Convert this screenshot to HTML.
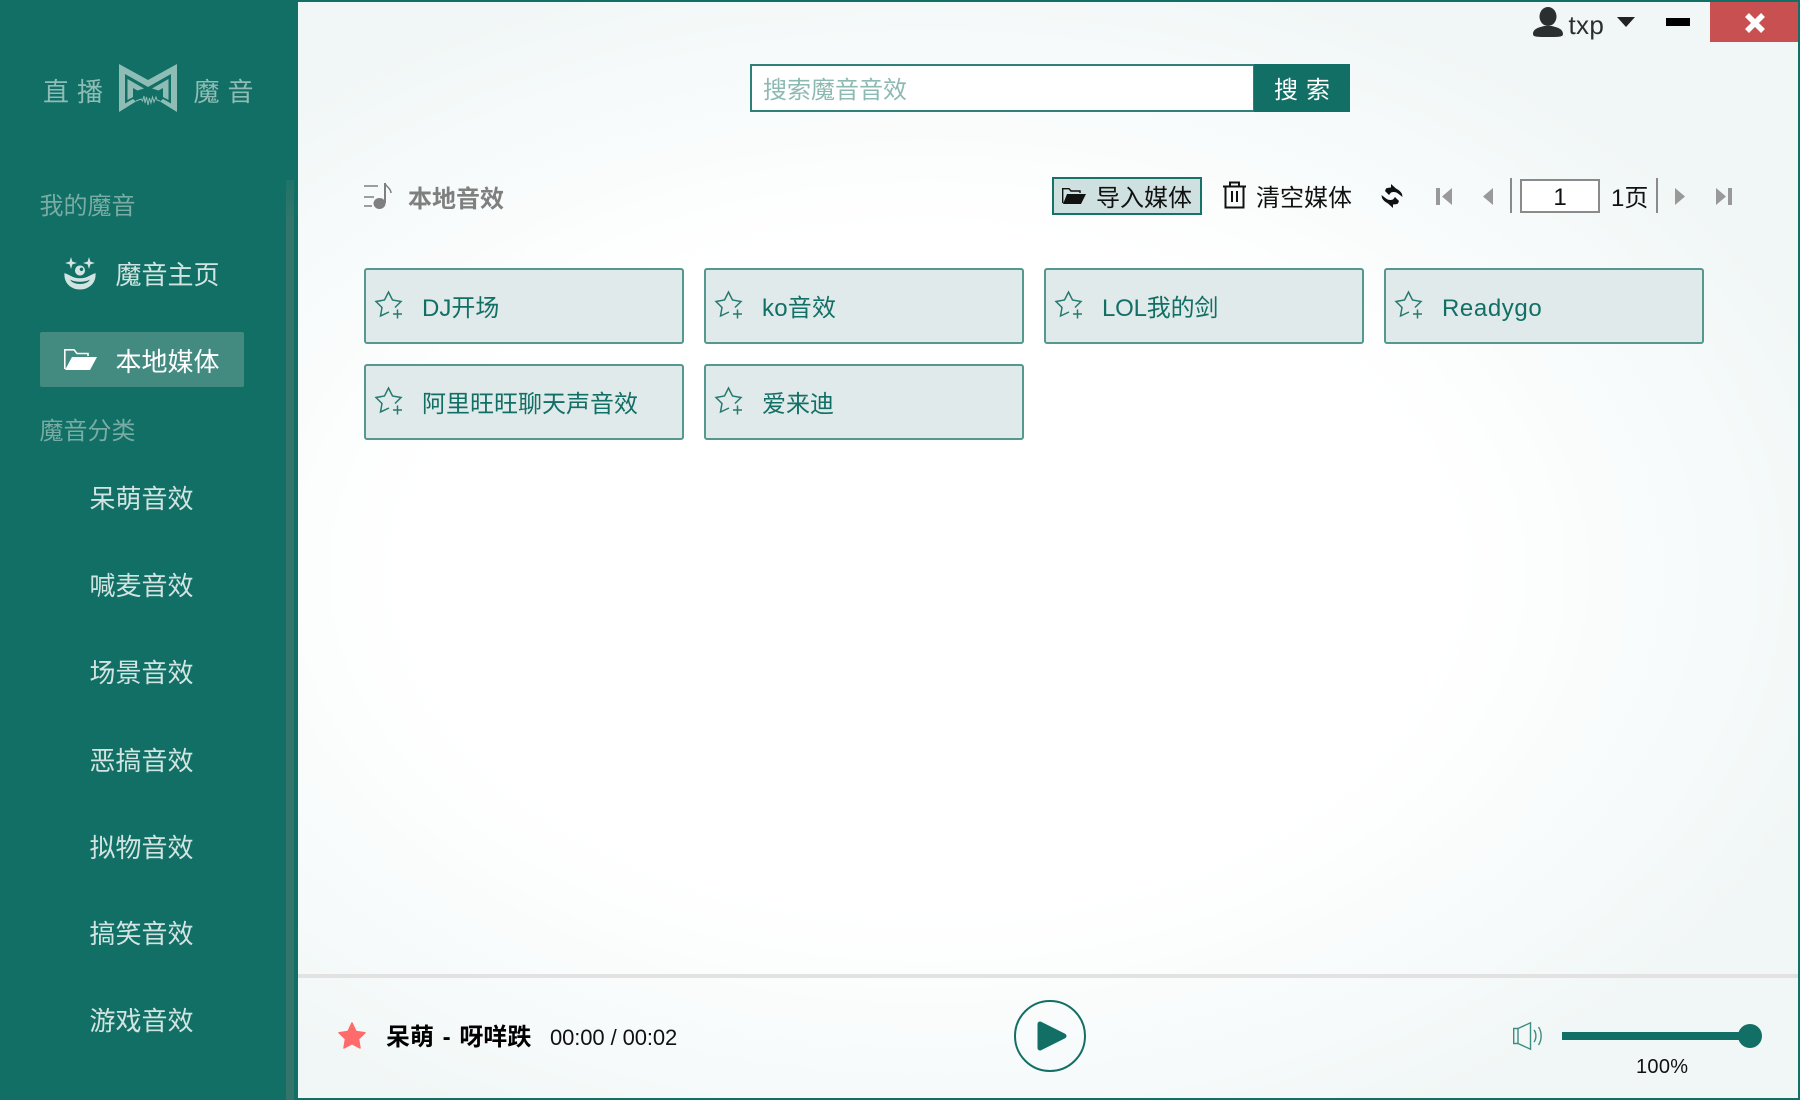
<!DOCTYPE html>
<html lang="zh"><head><meta charset="utf-8"><title>直播魔音</title>
<style>
html,body{margin:0;padding:0;width:1800px;height:1100px;overflow:hidden;background:#fff}
body{position:relative;font-family:"Liberation Sans","Noto Sans CJK SC",sans-serif}
#main{position:absolute;left:298px;top:0;width:1502px;height:1100px;box-sizing:border-box;border:2px solid #126f65;border-left:0;background:radial-gradient(ellipse 950px 620px at 42% 52%,#fff 55%,#f6fafa 85%,#f1f7f6 100%)}
#side{position:absolute;left:0;top:0;width:298px;height:1100px;background:#116f65}
.t{position:absolute;line-height:40px;height:40px;white-space:nowrap}
.a{position:absolute}
svg{position:absolute;overflow:visible}
.nav{left:90px;font-size:26px;color:#d2e4e1}
.cat{left:39.500px;font-size:24px;color:#79aca4}
.logo{font-size:26px;color:#8fbdb6}
.card{position:absolute;width:320px;height:76px;box-sizing:border-box;border:2px solid #55988f;border-radius:3px;background:#e0eaea}
.card svg{left:8.500px;top:21px}
.card span{position:absolute;left:56px;top:19px;font-size:24px;line-height:40px;color:#126f65;white-space:nowrap}
.blk{font-size:24px;color:#111}
.g{fill:#999}
</style></head><body>
<div id="main"></div>
<div id="side"></div>
<div class="a" style="left:286px;top:180px;width:8px;height:920px;background:linear-gradient(#1f7469,#33756b 40px)"></div>

<div class="t logo" style="left:43px;top:72px">直</div>
<div class="t logo" style="left:77px;top:72px">播</div>
<div class="t logo" style="left:193.500px;top:72px">魔</div>
<div class="t logo" style="left:227.500px;top:72px">音</div>
<svg style="left:119px;top:64px" width="58" height="48" viewBox="0 0 58 48">
<path fill="#8fbdb6" fill-rule="evenodd" d="M0 0L29 16L58 0V48L41 37.500L44 35L52 39.500V10L29 23L6 10V39.500L14 35L17 37.500L0 48Z"/>
<path fill="#8fbdb6" d="M8.500 15L25 24.500L18.500 26.500L14 24V33L8.500 36ZM49.500 15L33 24.500L39.500 26.500L44 24V33L49.500 36Z"/>
<path fill="none" stroke="#8fbdb6" stroke-width="1" d="M17 37L22 35L23.500 37L25 32L26 39L27.500 33L29 41L30.500 34L32 39L33.500 33L35 38L37 33L38 36L41 37"/>
</svg>

<div class="t cat" style="top:186.500px">我的魔音</div>
<svg style="left:64px;top:256px" width="32" height="34" viewBox="0 0 32 34">
<g fill="#d2e4e1"><path d="M7 1L8.400 5.600L13 7L8.400 8.400L7 13L5.600 8.400L1 7L5.600 5.600Z"/><path d="M25 1L26.400 5.600L31 7L26.400 8.400L25 13L23.600 8.400L19 7L23.600 5.600Z"/>
<path fill-rule="evenodd" d="M16 9.500a5 5 0 1 0 .01 0ZM17.500 11.500a1.800 1.800 0 1 1-.01 0Z"/>
<path d="M0.500 17C3 18 5 19 7 20C12 23 20 23 25 20C27 19 29 18 31.500 17C32.500 27 25 33.500 16 33.500C7 33.500-.5 27 .5 17ZM6 23.500C9 29.500 23 29.500 26 23.500C21 26.500 11 26.500 6 23.500Z" fill-rule="evenodd"/></g></svg>
<div class="t nav" style="left:115.500px;top:255px">魔音主页</div>
<div class="a" style="left:40px;top:332px;width:204px;height:55px;background:#438a80;border-radius:2px"></div>
<svg style="left:64px;top:349px" width="33" height="21" viewBox="0 0 33 21">
<path fill="none" stroke="#fff" stroke-width="1.600" d="M.8 20V.8H10L13 4.500H24V7"/>
<path fill="#fff" d="M8 8H33L26 21H1Z"/></svg>
<div class="t nav" style="left:115.500px;top:342px;color:#fff">本地媒体</div>
<div class="t cat" style="top:411.500px">魔音分类</div>
<div class="t nav" style="left:89.500px;top:479px">呆萌音效</div>
<div class="t nav" style="left:89.500px;top:566px">喊麦音效</div>
<div class="t nav" style="left:89.500px;top:653px">场景音效</div>
<div class="t nav" style="left:89.500px;top:740.500px">恶搞音效</div>
<div class="t nav" style="left:89.500px;top:827.500px">拟物音效</div>
<div class="t nav" style="left:89.500px;top:914px">搞笑音效</div>
<div class="t nav" style="left:89.500px;top:1001px">游戏音效</div>

<!-- top bar -->
<svg style="left:1533px;top:7px" width="30" height="30" viewBox="0 0 30 30">
<ellipse cx="15" cy="9.500" rx="8.500" ry="9.500" fill="#2c2f2f"/><path fill="#2c2f2f" d="M0 27C0 21 8 20 11 19H19C22 20 30 21 30 27C30 30 26 30 15 30S0 30 0 27Z"/></svg>
<div class="t" style="left:1568.500px;top:5px;font-size:26px;color:#2c2f2f;letter-spacing:.3px">txp</div>
<svg style="left:1617px;top:17px" width="18" height="10"><path d="M0 0H18L9 10Z" fill="#222"/></svg>
<div class="a" style="left:1666px;top:18px;width:24px;height:8px;background:#000"></div>
<div class="a" style="left:1710px;top:2px;width:88px;height:40px;background:#c85050"></div>
<svg style="left:1744px;top:12px" width="22" height="22"><path d="M3 3L19 19M19 3L3 19" stroke="#fff" stroke-width="5.500"/></svg>

<!-- search -->
<div class="a" style="left:750px;top:64px;width:505px;height:48px;box-sizing:border-box;border:2px solid #2f8076;background:#fff"></div>
<div class="t" style="left:763px;top:71px;font-size:24px;color:#8db9b3">搜索魔音音效</div>
<div class="a" style="left:1254px;top:64px;width:96px;height:48px;background:#126f65"></div>
<div class="t" style="left:1274px;top:71px;font-size:24px;color:#fff;letter-spacing:8px">搜索</div>

<!-- title / toolbar -->
<svg style="left:364px;top:182px" width="28" height="28" viewBox="0 0 28 28">
<path d="M0 4H14M0 15H10M0 24H8" stroke="#7f7f7f" stroke-width="1.500" fill="none"/>
<path d="M21 1V21" stroke="#7f7f7f" stroke-width="2" fill="none"/><path d="M21 1C22 5 27 6 27 11" stroke="#7f7f7f" stroke-width="1.500" fill="none"/>
<ellipse cx="15.500" cy="21.500" rx="6" ry="5.500" fill="#7f7f7f"/></svg>
<div class="t" style="left:408px;top:180px;font-size:24px;font-weight:bold;color:#7f7f7f">本地音效</div>

<div class="a" style="left:1052px;top:176.500px;width:150px;height:38.500px;box-sizing:border-box;border:2px solid #16736a;background:#cfe0e0"></div>
<svg style="left:1062px;top:188px" width="24" height="16" viewBox="0 0 24 16">
<path d="M.7 15V.7H7L9 3H18V5" fill="none" stroke="#111" stroke-width="1.400"/><path d="M5 6H24L19 16H1Z" fill="#111"/></svg>
<div class="t blk" style="left:1096px;top:179px">导入媒体</div>
<svg style="left:1222.500px;top:181px" width="23" height="28" viewBox="0 0 23 28">
<path d="M0 5.500H23M7 5V1.500H16V5" fill="none" stroke="#111" stroke-width="2"/><path d="M2.500 6V26.500H20.500V6M9 10V21M14 10V21" fill="none" stroke="#111" stroke-width="2"/></svg>
<div class="t blk" style="left:1256px;top:179px">清空媒体</div>
<svg style="left:1381px;top:184px" width="22" height="24" viewBox="0 0 22 24">
<path fill="#111" d="M10 0L15 4.500C18 6 20 8 21 10L21.500 13L17 9.500C15 8 13 7.500 10 8.500L8 11L4 7L5 4.500C6 4 8 3.500 10 3.500ZM12 24L7 19.500C4 18 2 16 1 14L.5 11L5 14.500C7 16 9 16.500 12 15.500L14 13L18 17L17 19.500C16 20 14 20.500 12 20.500Z"/></svg>

<svg style="left:1436px;top:188px" width="16" height="17"><path class="g" d="M0 0H4V17H0ZM16 0V17L6 8.500Z"/></svg>
<svg style="left:1483px;top:188px" width="10" height="17"><path class="g" d="M10 0V17L0 8.500Z"/></svg>
<div class="a" style="left:1510px;top:178px;width:2px;height:35px;background:#8a8a8a"></div>
<div class="a" style="left:1520px;top:179px;width:80px;height:34px;box-sizing:border-box;border:2px solid #8a8a8a;background:#fff"></div>
<div class="t blk" style="left:1520px;width:80px;text-align:center;top:178px;font-size:24px">1</div>
<div class="t blk" style="left:1611px;top:179px">1页</div>
<div class="a" style="left:1656px;top:178px;width:2px;height:35px;background:#8a8a8a"></div>
<svg style="left:1675px;top:188px" width="10" height="17"><path class="g" d="M0 0V17L10 8.500Z"/></svg>
<svg style="left:1716px;top:188px" width="16" height="17"><path class="g" d="M0 0V17L10 8.500ZM12 0H16V17H12Z"/></svg>

<!-- cards -->
<div class="card" style="left:364px;top:268px"><svg width="28" height="28" viewBox="0 0 28 28"><path d="M14 21L5.500 25L7 16.500L1 10.500L9.500 9L13.500 1L17.500 9L26 10.500L20 16.500M22.500 18.500V27.500M18 23H27" fill="none" stroke="#26796f" stroke-width="1.500"/></svg><span>DJ开场</span></div>
<div class="card" style="left:704px;top:268px"><svg width="28" height="28" viewBox="0 0 28 28"><path d="M14 21L5.500 25L7 16.500L1 10.500L9.500 9L13.500 1L17.500 9L26 10.500L20 16.500M22.500 18.500V27.500M18 23H27" fill="none" stroke="#26796f" stroke-width="1.500"/></svg><span style="letter-spacing:.2px">ko音效</span></div>
<div class="card" style="left:1044px;top:268px"><svg width="28" height="28" viewBox="0 0 28 28"><path d="M14 21L5.500 25L7 16.500L1 10.500L9.500 9L13.500 1L17.500 9L26 10.500L20 16.500M22.500 18.500V27.500M18 23H27" fill="none" stroke="#26796f" stroke-width="1.500"/></svg><span style="letter-spacing:-.2px">LOL我的剑</span></div>
<div class="card" style="left:1384px;top:268px"><svg width="28" height="28" viewBox="0 0 28 28"><path d="M14 21L5.500 25L7 16.500L1 10.500L9.500 9L13.500 1L17.500 9L26 10.500L20 16.500M22.500 18.500V27.500M18 23H27" fill="none" stroke="#26796f" stroke-width="1.500"/></svg><span style="letter-spacing:.6px">Readygo</span></div>
<div class="card" style="left:364px;top:364px"><svg width="28" height="28" viewBox="0 0 28 28"><path d="M14 21L5.500 25L7 16.500L1 10.500L9.500 9L13.500 1L17.500 9L26 10.500L20 16.500M22.500 18.500V27.500M18 23H27" fill="none" stroke="#26796f" stroke-width="1.500"/></svg><span>阿里旺旺聊天声音效</span></div>
<div class="card" style="left:704px;top:364px"><svg width="28" height="28" viewBox="0 0 28 28"><path d="M14 21L5.500 25L7 16.500L1 10.500L9.500 9L13.500 1L17.500 9L26 10.500L20 16.500M22.500 18.500V27.500M18 23H27" fill="none" stroke="#26796f" stroke-width="1.500"/></svg><span>爱来迪</span></div>

<!-- player -->
<div class="a" style="left:298px;top:974px;width:1500px;height:4px;background:#e2e2e2"></div>
<svg style="left:338px;top:1022px" width="28" height="27" viewBox="0 0 28 27"><path fill="#ff6b6b" stroke="#ff6b6b" stroke-linejoin="round" stroke-width="1.500" d="M14 1L18 9.500L27 10.700L20.500 17L22 26L14 21.700L6 26L7.500 17L1 10.700L10 9.500Z"/></svg>
<div class="t" style="left:386px;top:1018px;font-size:24px;font-weight:bold;color:#000;word-spacing:2px">呆萌 - 呀咩跌</div>
<div class="t" style="left:550px;top:1017.500px;font-size:22px;color:#111;letter-spacing:-.1px">00:00 / 00:02</div>
<svg style="left:1014px;top:1000px" width="72" height="72"><circle cx="36" cy="36" r="35" fill="none" stroke="#126f65" stroke-width="2"/><path d="M26 24L50 36L26 48Z" fill="#126f65" stroke="#126f65" stroke-width="5" stroke-linejoin="round"/></svg>
<svg style="left:1513px;top:1022px" width="30" height="28" viewBox="0 0 30 28">
<path d="M.7 6.500H5V21.500H.7ZM5 6.500L17.500.8V27.200L5 21.500" fill="none" stroke="#3f8c82" stroke-width="1.400"/>
<path d="M21 8C23.500 11 23.500 17 21 20M25.500 5C29 10 29 18 25.500 23" fill="none" stroke="#3f8c82" stroke-width="1.400"/></svg>
<div class="a" style="left:1562px;top:1032px;width:188px;height:8px;background:#126f65"></div>
<div class="a" style="left:1738px;top:1024px;width:24px;height:24px;border-radius:50%;background:#126f65"></div>
<div class="t" style="left:1636px;top:1047px;font-size:20px;color:#111;letter-spacing:.3px">100%</div>
</body></html>
